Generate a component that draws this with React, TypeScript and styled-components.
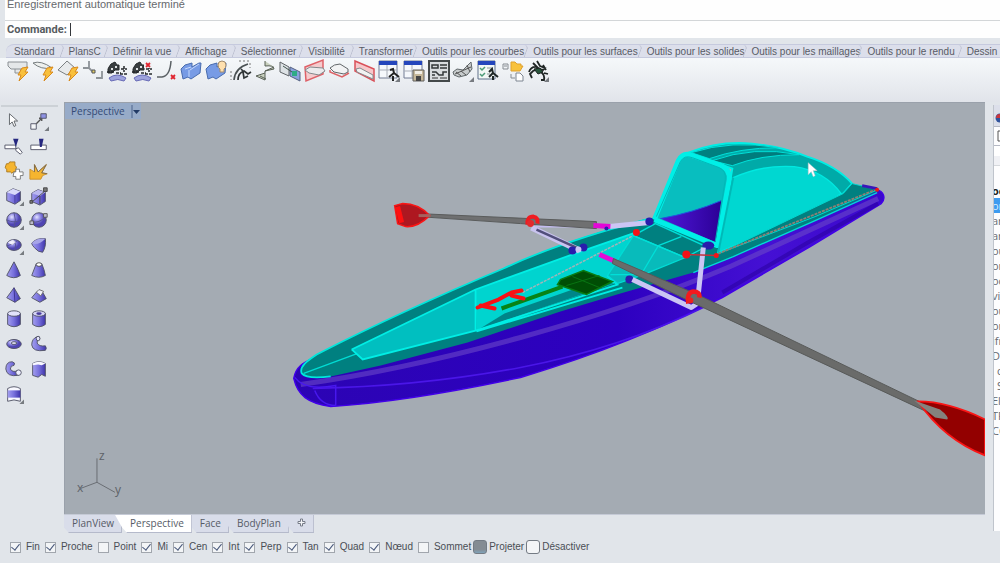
import React from "react";
import styled, { createGlobalStyle } from "styled-components";

const ui = '"Liberation Sans", Arial, sans-serif';
const humanist = '"Open Sans", "Noto Sans", sans-serif';

const GlobalStyle = createGlobalStyle`
  * { box-sizing: border-box; }
  body { margin: 0; background: #e1e5ea; color: #4a4e55; font: 10px/14px ${ui}; overflow: hidden; }
  button { font: inherit; color: inherit; border: 0; padding: 0; background: none; }
`;

const Window = styled.div`
  display: flex;
  flex-direction: column;
  min-height: 100vh;
`;

const CommandPanel = styled.section`
  margin-left: 5px;
  background: #fefefe;
`;

const History = styled.div`
  height: 21px;
  padding: 0 2px;
  border-bottom: 1px solid #d3d6d8;
  font-size: 11px;
  line-height: 8px;
  color: #66696d;
`;

const Prompt = styled.div`
  display: flex;
  align-items: center;
  height: 17px;
  padding: 0 2px;
`;

const PromptLabel = styled.label`
  font: bold 11px/14px Roboto, ${ui};
  color: #565b60;
`;

const Caret = styled.span`
  width: 1px;
  height: 13px;
  margin-left: 3px;
  background: #33363a;
`;

const PromptInput = styled.input`
  flex: 1;
  min-width: 0;
  border: 0;
  outline: 0;
  background: transparent;
  font: 11px ${ui};
`;

const Tabs = styled.nav`
  display: flex;
  height: 14px;
  margin: 6px 0 0 6px;
  padding-left: 3px;
  overflow: hidden;
  border: solid #c6cade;
  border-width: 1px 0;
  border-top-left-radius: 8px;
  background: #dcdfeb;
`;

const ToolTab = styled.button<{ $gap: number }>`
  position: relative;
  flex: none;
  height: 12px;
  padding: 0 ${(p) => p.$gap - 5}px 0 5px;
  line-height: 13px;
  white-space: nowrap;
  color: #585b65;
  &::after {
    content: "";
    position: absolute;
    top: 0;
    right: 1px;
    width: 5px;
    height: 12px;
    border-right: 1px solid #b9bdce;
    border-top-right-radius: 5px;
    transform: skewX(-20deg);
  }
`;

const ToolBar = styled.div`
  height: 44px;
  padding: 2px 6px 0;
  background: linear-gradient(#f5f8fa, #e1e4ea);
`;

const ToolGrid = styled.div`
  display: grid;
  grid-template-columns: repeat(22, 1fr);
  width: 544px;
`;

const IconButton = styled.button`
  display: flex;
  align-items: center;
  justify-content: center;
  svg { flex: none; display: block; overflow: visible; }
`;

const Main = styled.div`
  display: flex;
  flex: 1;
`;

const Side = styled.aside`
  flex: 0 0 64px;
  padding: 3px 6px 0 1px;
`;

const Grip = styled.div`
  height: 2px;
  margin-bottom: 2px;
  background: #ccd1d6;
`;

const SideGrid = styled.div`
  display: grid;
  grid-template-columns: repeat(2, 25px);
  grid-template-rows: repeat(12, 1fr);
  height: 297px;
`;

const Center = styled.main`
  display: flex;
  flex: 1;
  flex-direction: column;
  min-width: 0;
`;

const Viewport = styled.div`
  position: relative;
  flex: 1;
  min-height: 300px;
  border: solid #9aa1ab;
  border-width: 1px 0 0 1px;
  background: #a4abb3;
`;

const Scene = styled.svg`
  position: absolute;
  inset: 0;
  width: 100%;
  height: 100%;
`;

const ViewTitle = styled.button`
  position: absolute;
  top: 0;
  left: 0;
  display: flex;
  align-items: center;
  gap: 6px;
  height: 16px;
  padding: 0 1px 0 6px;
  background: #97abc8;
  font: 10px/16px ${humanist};
  color: #344a75;
`;

const ViewTabs = styled.nav`
  display: flex;
  height: 19px;
  border-top: 1px solid #c5cad6;
  overflow: hidden;
`;

const ViewTab = styled.button<{ $active?: boolean }>`
  position: relative;
  z-index: ${(p) => (p.$active ? 1 : 0)};
  height: 18px;
  padding: 0 7px 0 15px;
  margin-left: -7px;
  clip-path: polygon(0 0, 100% 0, 100% 100%, 12px 100%, 7px 70%);
  border-right: 1px solid #b5bacb;
  border-bottom: 1px solid #b5bacb;
  background: ${(p) => (p.$active ? "#ffffff" : "#d9ddea")};
  font: 10px/17px ${humanist};
  color: #565b66;
`;

const Layers = styled.aside`
  flex: 0 0 7px;
  margin: 3px 0 2px 8px;
  overflow: hidden;
  border-left: 1px solid #bfc4cc;
  background: #fdfdfe;
  font: 11px/15px ${humanist};
  color: #666a70;
`;

const LayerTab = styled.div`
  height: 22px;
  padding-top: 6px;
  border-bottom: 1px solid #b5b9c4;
  background: #dcdfea;
`;

const LayerTools = styled.div`
  height: 19px;
  padding: 3px;
  border-bottom: 1px solid #b5b9c4;
`;

const LayerHead = styled.div`
  height: 20px;
  margin-bottom: 17px;
  border-bottom: 1px solid #d5d8dc;
  background: linear-gradient(#fff 50%, #f0f1f5 50%);
`;

const LayerRow = styled.div<{ $tone?: "current" | "selected"; $indent?: boolean }>`
  height: 15px;
  white-space: nowrap;
  text-indent: ${(p) => (p.$indent ? 3 : -2)}px;
  font-weight: ${(p) => (p.$tone === "current" ? 700 : 400)};
  background: ${(p) => (p.$tone === "selected" ? "#3d9bf0" : "transparent")};
  color: ${(p) => (p.$tone === "selected" ? "#d8ecff" : p.$tone === "current" ? "#222" : "inherit")};
`;

const SnapBar = styled.div`
  display: flex;
  align-items: flex-start;
  gap: 5px;
  height: 30px;
  padding: 7px 0 0 6px;
  margin-left: 4px;
`;

const Snap = styled.label<{ $large?: boolean }>`
  display: flex;
  align-items: center;
  gap: ${(p) => (p.$large ? 2 : 5)}px;
  margin-left: ${(p) => (p.$large ? -3 : 0)}px;
  height: 14px;
`;

const Box = styled.input<{ $large?: boolean; $filled?: boolean }>`
  appearance: none;
  display: grid;
  place-items: center;
  width: ${(p) => (p.$large ? 14 : 11)}px;
  height: ${(p) => (p.$large ? 14 : 11)}px;
  margin: 0;
  border: 1px solid ${(p) => (p.$large ? "#747b84" : "#a1a6ad")};
  border-radius: ${(p) => (p.$large ? 3 : 0)}px;
  background: ${(p) => (p.$filled ? "linear-gradient(#858c93 70%, #7fa3ba)" : "#f3f5f7")};
  &:checked::after {
    content: "";
    width: 4px;
    height: 7px;
    margin-top: -2px;
    border: solid #47577a;
    border-width: 0 1px 1px 0;
    transform: rotate(38deg);
  }
`;

const toolTabs: [string, number][] = [
  ["Standard", 14], ["PlansC", 12], ["Définir la vue", 14], ["Affichage", 14],
  ["Sélectionner", 12], ["Visibilité", 14], ["Transformer", 9],
  ["Outils pour les courbes", 9], ["Outils pour les surfaces", 9],
  ["Outils pour les solides", 7], ["Outils pour les maillages", 7],
  ["Outils pour le rendu", 12], ["Dessin", 12],
];

const Bolt = () => (
  <path d="M15 8 21 7 18 12 21 12 12 21 14 15 11 15Z" fill="#f8c03c" stroke="#d98a1c" strokeWidth="1" />
);
const Corner = () => <path d="M22 17v5h-5z" fill="#777b80" />;
const Cross = ({ x, y }: { x: number; y: number }) => (
  <path d={`M${x} ${y}l4 4m0-4l-4 4`} stroke="#e02530" strokeWidth="1.8" />
);
const Helicopter = () => (
  <g fill="none" stroke="#25292b">
    <path d="M3 7l2-3 4-2 2 3h2v5h-4l-3 3H2V9z" fill="#3a3f41" strokeWidth="1" />
    <path d="M1 12h7M10 13h5M15 9h6M18 6v6M14 14h7" strokeWidth="1.5" strokeDasharray="3 1" />
    <path d="M5 8h2v2H5zM9 6h2v2H9z" fill="#dfe3e5" stroke="none" />
    <path d="M3 18q8-6 17 0l-2 3q-6-3-13 0z" fill="#9da3dc" stroke="#6669b6" />
  </g>
);
const Turtle = () => (
  <g fill="none" stroke="#1f2524">
    <path d="M2 12q2-6 8-5l-4-4M10 1l3 5 5 2-2 2-5-1-5 2-3 3 2 4M16 5l3 5M14 12q4 3 3 8h-3M17 13l4 1" strokeWidth="1.8" />
    <path d="M7 9l6-1 3 4-5 2z" fill="#27543b" />
  </g>
);

const toolIcons: React.ReactNode[] = [
  <><path d="M1 2h19v5l-3 2H4L1 6zM8 9v4h6V9" fill="#e4e7e9" stroke="#8a9094" /><Bolt /></>,
  <><path d="M1 3Q9 0 20 8 9 10 1 3Z" fill="#edf0ee" stroke="#777e80" /><Bolt /></>,
  <><path d="M10 1l8 7-8 7-9-5z" fill="#e7eaec" stroke="#7b8082" /><Bolt /></>,
  <><path d="M1 8h6V1M7 8l4 4M14 18h6v-7" fill="none" stroke="#8d9398" strokeWidth="1.8" /><path d="M10 10h3v3h-3z" fill="#e4ce60" stroke="#50545a" /></>,
  <Helicopter />,
  <><Helicopter /><path d="M13 1h8v7h-8z" fill="#eff2f5" /><Cross x={15} y={3} /></>,
  <><path d="M1 17h5q8-1 9-16" fill="none" stroke="#5b6165" strokeWidth="1.5" /><Cross x={15} y={15} /></>,
  <><path d="M1 9l4-4 7-2v4l7-4 2 0-1 10-9 6-3-2-5 2z" fill="#779be5" stroke="#496cae" /><path d="M5 9l6-2M10 10l9-6M9 17V10" stroke="#c5d8fc" /></>,
  <><path d="M1 9l4-4 7-2v4l7-4 2 0-1 10-9 6-3-2-5 2z" fill="#779be5" stroke="#496cae" /><path d="M13 5q0-4 4-4t4 4q0 3-2 4v3h-4V9q-2-1-2-4z" fill="#ffe0ae" stroke="#a28b6c" /></>,
  <><path d="M4 20Q5 8 18 4" fill="none" stroke="#4b5254" strokeWidth="1.7" /><path d="M8 20q0-7 6-9l4 3 3-2M13 12l1 6 4-2M11 9l3 3" stroke="#303537" fill="none" strokeWidth="1.7" /><path d="M1 11v9M9 1h11M20 3v5" stroke="#777" strokeDasharray="2 2" fill="none" /></>,
  <path d="M10 1v5q9-1 9 3l-9 2 9-4M10 11v9l-9-4 9-3M5 16l6 3" fill="#c8d0be" stroke="#596157" />,
  <><path d="M1 2l9 5v9l-9-4z" fill="#dde2e5" stroke="#5e6266" /><path d="M11 7l10 5v9l-10-5z" fill="#8aa1dc" stroke="#566281" /><path d="M4 6l12 8" stroke="#40534c" /><path d="M13 11h5v5h-5z" fill="#2fab86" /></>,
  <><path d="M1 7L19 0v14L2 21z" fill="#f5cbcd" stroke="#de6168" strokeWidth="1.5" /><path d="M1 10l5-3 13 1 2 3-6 4-10-2z" fill="#ebeaec" stroke="#84898c" /></>,
  <><path d="M1 8q4-4 10-4l8 5v3l-4 2-10-2z" fill="#f2f3f4" stroke="#62676a" /><path d="M1 10v2l12 5 7-4" fill="none" stroke="#dc6367" strokeWidth="1.5" /></>,
  <><path d="M1 1l19 8v12L1 11z" fill="#f6c8cb" stroke="#d95059" strokeWidth="1.5" /><path d="M2 9l4-1 13 7v4L3 12z" fill="#f2f2f2" stroke="#858b8e" /></>,
  <><path d="M1 1h18v17H1z" fill="#f5f8fc" stroke="#737c94" /><path d="M1 1h18v4H1z" fill="#2446bc" /><path d="M1 10h18M9 5v13" stroke="#a9aeb8" /><path d="M12 10l3-1 1 4 5 4M16 13l-5 4M15 16v5" stroke="#222" strokeWidth="2" fill="none" /><Corner /></>,
  <><path d="M1 1h18v17H1z" fill="#f5f8fc" stroke="#737c94" /><path d="M1 1h18v4H1z" fill="#2446bc" /><path d="M1 11h18M9 5v13" stroke="#a9aeb8" /><path d="M10 10h11v11H10z" fill="#c5b799" stroke="#60615e" /><path d="M12 11h7v3h-7z" fill="#f1eee6" /><path d="M13 16h5v5h-5z" fill="#454545" /></>,
  <><path d="M1 1h20v20H1z" fill="#d9dcde" stroke="#44494a" strokeWidth="2" /><path d="M4 5h6v3H4zM12 5h7M12 8h7M4 12h4l3 3h4v-3h4M4 15h3" fill="none" stroke="#333738" strokeWidth="1.5" /><path d="M4 18h6m2 0h7" stroke="#333" /></>,
  <><path d="M1 12l4-3 6 1 8-8 1 7-5 6-8 2-5-2z" fill="#c8cccd" stroke="#61686b" /><path d="M4 12l5 4M9 11l5 4M15 5l3 7M3 14L19 7" stroke="#555" fill="none" /><Corner /></>,
  <><path d="M1 1h17v18H1z" fill="#f2f7f5" stroke="#60708b" /><path d="M1 1h17v4H1z" fill="#2446bc" /><path d="M3 8l2 2 3-3M3 14l2 2 3-3" stroke="#4b9a77" fill="none" strokeWidth="1.5" /><path d="M10 8h6M10 14h3" stroke="#8a9799" /><path d="M12 12l3-3 1 4 5 4M16 13l-4 4M16 16v4" stroke="#1f2727" strokeWidth="2" fill="none" /></>,
  <><path d="M1 4h5v5H1zM2 6h3M9 14v4h4" fill="none" stroke="#868c92" /><path d="M9 2h4l2 2h4v2h2l-3 5H9z" fill="#f8c23d" stroke="#dfa12e" /><path d="M14 13h4l3 3v5h-7z" fill="#fff" stroke="#7c8591" /></>,
  <><Turtle /><Corner /></>,
];

const line = { stroke: "#4f5265", strokeWidth: 1 };
const sideIcons: React.ReactNode[] = [
  <path d="M6 3v12l3-3 2 5 2-1-2-5h4z" fill="#fff" stroke="#5a5f65" />,
  <><path d="M2 14h6v6H2z" fill="#f4f6f8" {...line} /><path d="M8 14l6-6M11 8h3v3" fill="none" stroke="#555" strokeWidth="1.5" /><path d="M13 3h6v5h-6z" fill="#8e92e4" {...line} /><Corner /></>,
  <><path d="M1 10h12v4H1zM13 14l3-1 4 5-2 2-5-4z" fill="#fff" {...line} /><path d="M10 3h6l-3 9z" fill="#25277f" /></>,
  <><path d="M2 10h17v5H2z" fill="#fff" {...line} /><path d="M11 3h5l-2 9h-2z" fill="#25277f" /></>,
  <><path d="M2 5q0-3 3-2 1-3 3-2h4v4q3 1 1 4v3h-3q-1 3-3 0H3V9Q0 8 2 5z" fill="#f5b52f" stroke="#a97926" /><path d="M11 12h2v-3h4v3h4v4h-3v4h-5v-3h-3z" fill="#fff" stroke="#777" /></>,
  <><path d="M1 9l5 3V4l4 8 9-8-5 9 6 1-5 2-2 4H1z" fill="#f5b52f" stroke="#c98f2c" /><path d="M6 12V4l4 8 9-8-5 9 6 1" stroke="#7b6a50" fill="none" /></>,
  <><path d="M3 7l7-4 8 3v10l-6 4-9-4z" fill="url(#violet)" {...line} /><path d="M3 7l7-4 8 3-6 4z" fill="#d9dafa" /><path d="M12 10v9" stroke="#463d9b" /><Corner /></>,
  <><path d="M3 8l7-4 8 3v10l-6 4-9-4z" fill="url(#violet)" {...line} /><path d="M3 8l7-4 8 3-6 4z" fill="#bab8ef" /><path d="M1 16h3v3H1zM16 2h4v4h-4zM12 11v9M4 17L17 6" fill="#777" stroke="#444" /></>,
  <><circle cx="11" cy="11" r="8" fill="url(#ball)" {...line} /><path d="M3 11q8 4 16 0M11 3q3 8 0 16" fill="none" stroke="#555491" /><Corner /></>,
  <><circle cx="11" cy="11" r="8" fill="url(#ball)" {...line} /><path d="M3 13q8 2 16-6" fill="none" stroke="#555491" /><path d="M1 12h4v4H1zM16 4h4v4h-4z" fill="#bbc" stroke="#555" /></>,
  <><ellipse cx="11" cy="11" rx="8" ry="6" fill="url(#ball)" {...line} /><path d="M3 12q9-2 12-6M10 5q5 6 1 12" stroke="#555491" fill="none" /><path d="M4 8l6-3 3 3-4 3z" fill="#fff" opacity=".75" /><Corner /></>,
  <><path d="M3 9q5-6 15-5 1 9-3 15-5 0-9-5-3-3-3-5z" fill="url(#violet)" {...line} /><path d="M3 9q7 3 15-5Q8 3 3 9" fill="#a7a5e8" /></>,
  <path d="M11 2q5 9 7 15-7 5-15 0z" fill="url(#violet)" {...line} />,
  <><path d="M8 4h6q3 7 4 13-7 4-15 0z" fill="url(#violet)" {...line} /><ellipse cx="11" cy="5" rx="3" ry="2" fill="#fff" stroke="#555" /></>,
  <><path d="M11 3l7 12-6 4-9-5z" fill="url(#violet)" {...line} /><path d="M11 3l1 16" stroke="#3c328e" /></>,
  <><path d="M8 8h7l4 7-7 4-9-5z" fill="url(#violet)" {...line} /><path d="M8 8l3-3 5 2-3 5z" fill="#f1f1fa" stroke="#666" /></>,
  <><path d="M4 5v12q7 5 14 0V5z" fill="url(#violet)" {...line} /><ellipse cx="11" cy="5" rx="7" ry="3" fill="#e1e1fb" {...line} /></>,
  <><path d="M4 5v12q7 5 14 0V5z" fill="url(#violet)" {...line} /><ellipse cx="11" cy="5" rx="7" ry="3" fill="#d5d4f5" {...line} /><ellipse cx="11" cy="5" rx="3" ry="1.5" fill="#473b9b" /></>,
  <><ellipse cx="11" cy="11" rx="8" ry="5" fill="url(#ball)" {...line} /><ellipse cx="11" cy="10" rx="3" ry="1.5" fill="#e9e9fb" {...line} /></>,
  <><path d="M3 12q0-7 6-9 3-1 3 2-4 2-3 5 2 4 9 3 2 3 0 5-14 2-15-6z" fill="url(#violet)" {...line} /><ellipse cx="10" cy="5" rx="2" ry="2.5" fill="#e5e5fa" {...line} /></>,
  <><path d="M2 11q0-8 7-8 4 1 2 4-4 0-4 4 2 4 8 2l1 5q-13 2-14-7z" fill="url(#violet)" {...line} /><circle cx="16" cy="15" r="3" fill="#eef" {...line} /></>,
  <><path d="M4 5q7-4 14 0v14l-4-2-4 3-6-2z" fill="url(#violet)" {...line} /><path d="M4 5q7-4 14 0l-4 2-4-1-6 1z" fill="#f7f7ff" /></>,
  <><path d="M4 5q7-4 14 0v14q-7-3-14 0z" fill="#f8f8ff" {...line} /><path d="M4 7h14v8H4z" fill="url(#violet)" /><Corner /></>,
];

const BoatScene = () => (
  <Scene viewBox="64 102 921 412" preserveAspectRatio="xMidYMid slice" fill="none" aria-label="Vue perspective du bateau">
    <defs>
      <linearGradient id="hull">
        <stop offset="0" stopColor="#2c04b4" /><stop offset=".55" stopColor="#2d00c0" /><stop offset=".8" stopColor="#4510d4" /><stop offset="1" stopColor="#3a08cc" />
      </linearGradient>
      <linearGradient id="seat" x1="0" y1="0" x2="1" y2="0"><stop stopColor="#5019dc" /><stop offset="1" stopColor="#2c0096" /></linearGradient>
    </defs>
    <path d="M293 378C295 366 303 362 312 358L600 245 700 230 876 189C884 190 886 198 881 203L810 246 722 297C660 328 600 353 520 377 450 392 380 403 330 406 307 403 297 395 293 378Z" fill="url(#hull)" stroke="#4100e8" strokeWidth="1.5" />
    <path d="M300 384Q400 370 520 337T730 266L878 198" stroke="#6a48c8" strokeWidth="5" opacity=".6" />
    <path d="M722 292L806 243 878 203" stroke="#2c02a4" strokeWidth="4" opacity=".6" />
    <path d="M312 388Q420 386 520 367T705 306" stroke="#4a16e8" strokeWidth="1.5" />
    <path d="M294 377Q304 391 335 385V405M314 390Q320 405 335 405" stroke="#4818ee" strokeWidth="1.5" />

    <path d="M302 374C297 366 307 360 316 354Q400 311 503 268 560 241 647 218L720 210 852 183 878 190 815 220 733 256 693 272 620 293 560 311 467 342 380 365 330 376Q306 379 302 374Z" fill="#008080" />
    <path d="M330 376Q306 379 301 373C298 366 307 360 316 354Q400 311 503 268 560 241 649 218" stroke="#00e6dc" strokeWidth="1.8" />
    <path d="M303 373L357 353M693 272L733 256 815 220 877 192" stroke="#00dcd4" strokeWidth="1.3" />

    <path d="M351 349L475 289 476 330 362 359Z" fill="#00bfc0" />
    <path d="M475 289L580 251 635 232 607 275 617 282 476 330Z" fill="#00d4cf" />
    <path d="M504 313L598 280 613 283 478 329Z" fill="#008588" />
    <path d="M351 349L475 289 580 251 635 232M351 349L362 359 476 330 617 284 607 275M475 289V330M476 331L622 287" stroke="#00eee5" strokeWidth="1.8" />
    <path d="M522 292L635 234" stroke="#9fb5b8" strokeWidth="1.5" strokeDasharray="3 1" />
    <path d="M607 275L633 235 685 257 643 274 617 283Z" fill="#08bbbb" stroke="#00ddd6" strokeWidth="1.3" />
    <path d="M633 235L655 223 706 246 685 257ZM658 245L681 236M658 245L642 272M610 274L641 274" stroke="#00dfd8" strokeWidth="1.3" />

    <path d="M688 152Q718 140 752 143 782 146 807 156 836 165 852 183L843 193Q824 209 718 252L732 168 707 159Z" fill="#00aaa8" stroke="#00eee5" strokeWidth="2" />
    <path d="M691 152Q731 139 778 147 740 147 709 158Z" fill="#008080" stroke="#00e0d9" />
    <path d="M712 160Q753 145 799 154 760 154 732 165Z" fill="#007c7d" stroke="#00e0d9" />
    <path d="M733 177Q762 164 794 166 824 170 841 193 822 208 718 252Z" fill="#00d7d1" stroke="#00e9e1" strokeWidth="1.4" />
    <path d="M718 253L843 193 852 183 878 189 815 216Z" fill="#008080" stroke="#00d7d0" />
    <path d="M718 253L878 188" stroke="#8e8074" strokeWidth="1.8" strokeDasharray="3 1" />
    <path d="M862 185L877 188" stroke="#3915bb" strokeWidth="3" /><circle cx="877" cy="189" r="2" fill="#ee1717" />
    <path d="M656 218L678 162Q683 153 691 156L719 166Q728 169 727 179L716 244Z" fill="#08bebf" />
    <path d="M660 218Q693 212 721 200L716 242Z" fill="url(#seat)" />
    <path d="M660 218Q693 212 721 200" stroke="#2055df" />
    <path d="M654 219L678 160Q683 151 692 155L721 165Q730 169 729 179L717 245 654 219" stroke="#00efe7" strokeWidth="5" strokeLinejoin="round" />
    <path d="M656 216L680 161Q684 154 692 157L719 167Q726 170 725 179L715 241" stroke="#00b9b8" />
    <path d="M733 177L718 252" stroke="#00b9b7" strokeWidth="2" />

    <path d="M535 226H620" stroke="#c4bdf0" strokeWidth="2" />
    <path d="M531 227L579 250" stroke="#c9c3ef" strokeWidth="6" /><path d="M536 229L576 247" stroke="#514e7b" strokeWidth="2.5" />
    <path d="M609 226L649 222" stroke="#cbc5f4" strokeWidth="5" />
    <path d="M418 213L596 221 596 228 520 223 418 216Z" fill="#6f7071" stroke="#595b5b" />
    <path d="M394 205L402 203Q418 203 429 215 417 227 405 226L397 223Z" fill="#ae1720" stroke="#fa1515" strokeWidth="1.5" />
    <path d="M397 206L401 222" stroke="#ff1010" strokeWidth="5" /><path d="M418 215H430" stroke="#a6625d" strokeWidth="3" />
    <path d="M593 225L610 226" stroke="#e408d7" strokeWidth="5" />
    <path d="M527 224Q526 216 533 216 538 217 537 223" stroke="#f01b20" strokeWidth="4" /><circle cx="530" cy="223" r="3.500" fill="#e32a2c" />
    <g fill="#291dac"><circle cx="572" cy="250" r="4" /><circle cx="583" cy="247" r="4" /><circle cx="606" cy="228" r="2" /><circle cx="649" cy="221" r="4" /><circle cx="629" cy="279" r="4" /><ellipse cx="708" cy="245" rx="6" ry="4" /></g>
    <circle cx="578" cy="249" r="3" fill="#cbc5f4" />
    <path d="M632 279L691 307 697 303 703 247" stroke="#cbc5f4" strokeWidth="5" strokeLinejoin="round" />
    <path d="M599 254L615 261" stroke="#e40bd7" strokeWidth="5" />
    <path d="M613 258L697 294 944 413 941 418 692 302 612 263Z" fill="#6a6b6a" stroke="#575958" />
    <path d="M918 401Q948 401 985 419V455Q944 439 918 401Z" fill="#930000" stroke="#fa1515" strokeWidth="1.8" />
    <path d="M914 400L940 409Q950 417 947 419L935 417Z" fill="#84827e" />
    <path d="M688 303Q686 292 693 291 700 291 699 297" stroke="#f31a1d" strokeWidth="4.500" /><circle cx="690" cy="300" r="3" fill="#ee2020" />
    <path d="M686 254L716 255" stroke="#c1303a" strokeWidth="1.5" />
    <g fill="#f31317"><circle cx="636" cy="232" r="3.5" /><circle cx="686" cy="254" r="4" /><circle cx="716" cy="255" r="2.5" /></g>
    <path d="M501 308L562 286" stroke="#078315" strokeWidth="4" />
    <path d="M557 284L560 279 583 270 612 281 586 294Z" fill="#004e05" stroke="#087d12" strokeWidth="1.5" /><path d="M572 276L599 287M566 285L599 275" stroke="#087412" />
    <path d="M477 307L498 299 511 292 521 290M480 305L494 308M511 295L523 298" stroke="#f91015" strokeWidth="4" strokeLinecap="round" strokeLinejoin="round" />

    <path d="M808 162V174L811 171 813 176 815 175 813 170H817Z" fill="#fff" stroke="#b3bcc2" strokeWidth=".5" />
    <path d="M96 482V458M96 482L80 488M96 482L114 492" stroke="#696d73" />
    <g fill="#5d6268" fontFamily="Open Sans, sans-serif" fontSize="12"><text x="98" y="460">z</text><text x="76" y="492">x</text><text x="114" y="494">y</text></g>
  </Scene>
);

const layers: { name: string; tone?: "current" | "selected"; indent?: boolean }[] = [
  { name: "oc", tone: "current" }, { name: "ort", tone: "selected" }, { name: "ar" }, { name: "ar" },
  { name: "ou" }, { name: "ort" }, { name: "oc" }, { name: "vir" }, { name: "ou" }, { name: "ort" },
  { name: "ifr" }, { name: "D" }, { name: "c", indent: true }, { name: "S", indent: true },
  { name: "El" }, { name: "TR" }, { name: "CC" },
];

const snaps: { name: string; on?: boolean; large?: boolean; filled?: boolean }[] = [
  { name: "Fin", on: true }, { name: "Proche", on: true }, { name: "Point" }, { name: "Mi", on: true },
  { name: "Cen", on: true }, { name: "Int", on: true }, { name: "Perp", on: true }, { name: "Tan", on: true },
  { name: "Quad", on: true }, { name: "Nœud", on: true }, { name: "Sommet" },
  { name: "Projeter", large: true, filled: true }, { name: "Désactiver", large: true },
];

const Icon = ({ children, size = 22 }: { children: React.ReactNode; size?: number }) => (
  <svg width={size} height={size} viewBox="0 0 22 22" fill="none" aria-hidden="true">{children}</svg>
);

const SharedPaints = styled.svg`
  position: absolute;
`;

export default function App() {
  return (
    <Window>
      <GlobalStyle />
      <SharedPaints width="0" height="0" aria-hidden="true">
        <defs>
          <linearGradient id="violet"><stop stopColor="#a39ff0" /><stop offset=".5" stopColor="#7770dc" /><stop offset="1" stopColor="#3e34aa" /></linearGradient>
          <radialGradient id="ball" cx=".35" cy=".3"><stop stopColor="#e4e4ff" /><stop offset=".5" stopColor="#8f89e4" /><stop offset="1" stopColor="#4f45b2" /></radialGradient>
        </defs>
      </SharedPaints>
      <CommandPanel>
        <History>Enregistrement automatique terminé</History>
        <Prompt>
          <PromptLabel htmlFor="command">Commande:</PromptLabel>
          <Caret />
          <PromptInput id="command" type="text" />
        </Prompt>
      </CommandPanel>
      <Tabs>
        {toolTabs.map(([name, gap]) => <ToolTab key={name} $gap={gap}>{name}</ToolTab>)}
      </Tabs>
      <ToolBar>
        <ToolGrid>
          {toolIcons.map((icon, i) => <IconButton key={i}><Icon>{icon}</Icon></IconButton>)}
        </ToolGrid>
      </ToolBar>
      <Main>
        <Side>
          <Grip />
          <SideGrid>
            {sideIcons.map((icon, i) => <IconButton key={i}><Icon size={20}>{icon}</Icon></IconButton>)}
          </SideGrid>
        </Side>
        <Center>
          <Viewport>
            <BoatScene />
            <ViewTitle>
              Perspective
              <svg width="9" height="13" viewBox="0 0 9 13" aria-hidden="true"><path d="M1 0v13" stroke="#4d648c" /><path d="M2 5h7L5.5 9z" fill="#223b66" /></svg>
            </ViewTitle>
          </Viewport>
          <ViewTabs>
            <ViewTab>PlanView</ViewTab>
            <ViewTab $active>Perspective</ViewTab>
            <ViewTab>Face</ViewTab>
            <ViewTab>BodyPlan</ViewTab>
            <ViewTab aria-label="Nouvelle vue">
              <svg width="9" height="9" viewBox="0 0 9 9" aria-hidden="true"><path d="M3.5 1h2v2.500H8v2H5.500V8h-2V5.500H1v-2h2.500z" fill="#f4f5f8" stroke="#777c89" /></svg>
            </ViewTab>
          </ViewTabs>
        </Center>
        <Layers>
          <LayerTab><svg width="10" height="10" viewBox="0 0 10 10" aria-hidden="true"><circle cx="6" cy="5" r="4.500" fill="#30539c" /><path d="M2 5a4 4 0 0 1 4-4v4z" fill="#c9363e" /></svg></LayerTab>
          <LayerTools><svg width="9" height="12" viewBox="0 0 9 12" aria-hidden="true"><path d="M1 1h7v10H1z" fill="#fff" stroke="#555" /></svg></LayerTools>
          <LayerHead />
          {layers.map((l, i) => <LayerRow key={i} $tone={l.tone} $indent={l.indent}>{l.name}</LayerRow>)}
        </Layers>
      </Main>
      <SnapBar>
        {snaps.map((s) => (
          <Snap key={s.name} $large={s.large}>
            <Box type="checkbox" defaultChecked={s.on} $large={s.large} $filled={s.filled} />
            {s.name}
          </Snap>
        ))}
      </SnapBar>
    </Window>
  );
}
